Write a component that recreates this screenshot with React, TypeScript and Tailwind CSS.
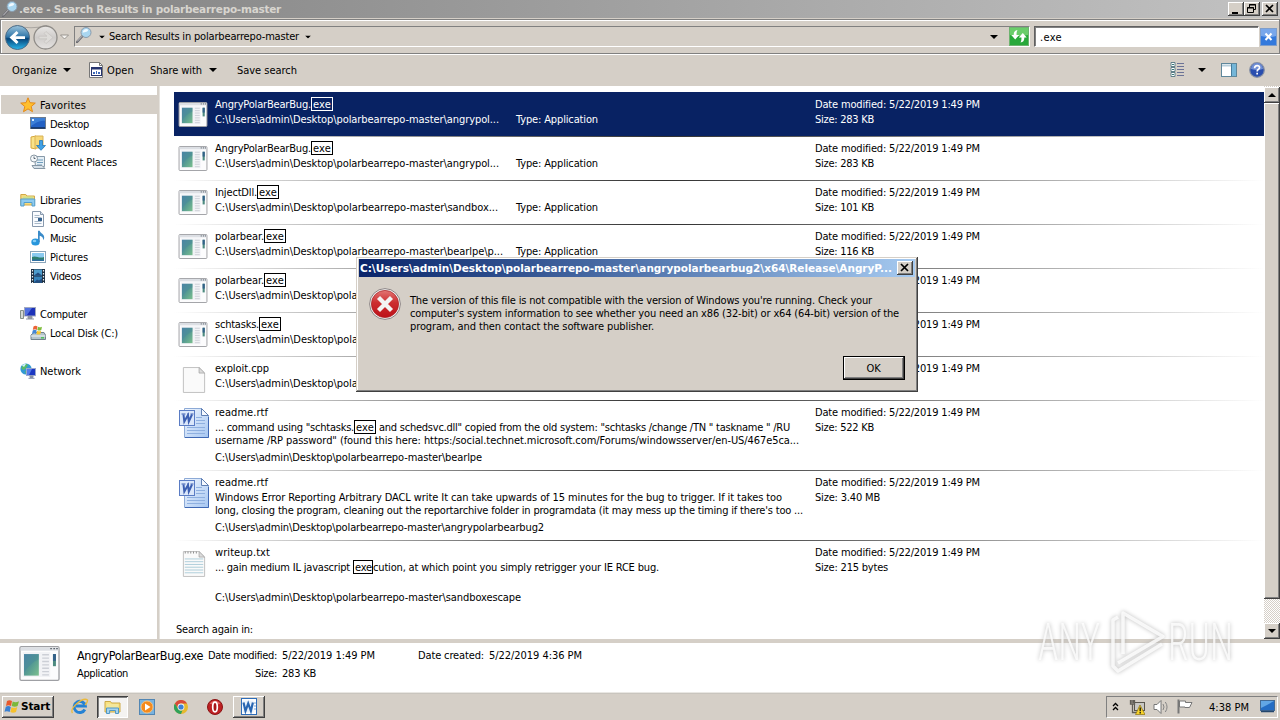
import { useLayoutEffect, useRef } from "react";
import type { ReactNode } from "react";

/* A single line of text whose tracking is adjusted so that it fills a known width. */
function T({ w, children, className = "" }: { w: number; children: string; className?: string }) {
  const ref = useRef<HTMLSpanElement>(null);
  useLayoutEffect(() => {
    const el = ref.current;
    if (!el) return;
    el.style.letterSpacing = "0px";
    const natural = el.getBoundingClientRect().width;
    el.style.letterSpacing = `${(w - natural) / children.length}px`;
  }, [w, children]);
  return (
    <span className={`block shrink-0 ${className}`} style={{ width: w }}>
      <span ref={ref} className="inline-block whitespace-pre">{children}</span>
    </span>
  );
}

const raised =
  "bg-[#d5cfc7] shadow-[inset_-1px_-1px_0_#404040,inset_1px_1px_0_#fff,inset_-2px_-2px_0_#808080]";

const wideBold = "text-[10.5px] font-bold [font-family:'DejaVu_Sans',sans-serif] [font-stretch:normal]";

function Caret({ className = "" }: { className?: string }) {
  return (
    <svg className={`block shrink-0 ${className}`} width="8" height="4" viewBox="0 0 8 4">
      <path d="M0 0h8L4 4z" fill="currentColor" />
    </svg>
  );
}

function Magnifier({ size }: { size: number }) {
  return (
    <svg width={size} height={size} viewBox="0 0 16 16" className="block shrink-0">
      <path d="M1 15L6.500 9" stroke="#6c6c72" strokeWidth="2.400" strokeLinecap="round" />
      <path d="M1.200 14.400L6 9.200" stroke="#d8d8dc" strokeWidth=".8" />
      <circle cx="10" cy="5.500" r="5" fill="#a9d6f0" stroke="#8b9cac" strokeWidth="1" />
      <path d="M6.600 5.500a3.600 3.600 0 0 1 5.400-3c.8 1.700-2.400 2.900-5.400 3z" fill="#f2faff" />
    </svg>
  );
}

function AppIcon({ w, h }: { w: number; h: number }) {
  return (
    <svg width={w} height={h} viewBox="0 0 30 26" className="block shrink-0">
      <defs>
        <linearGradient id="appArt" x2="1" y2="1">
          <stop stopColor="#4f86a8" /><stop offset=".5" stopColor="#559a93" /><stop offset="1" stopColor="#7cc08e" />
        </linearGradient>
      </defs>
      <rect x=".5" y=".5" width="29" height="25" rx="1" fill="#fcfcfd" stroke="#9fa0a4" />
      <rect x="1" y="1" width="28" height="2.500" fill="#dcdfe4" />
      <path d="M23 2h1.200M25.300 2h1.200M27.400 2h1.200" stroke="#5c636c" />
      <rect x="2.500" y="4.500" width="20.500" height="18.500" fill="#f2f3f6" />
      <rect x="3.500" y="6" width="11" height="16" fill="url(#appArt)" />
      <path d="M3.500 20q5-8 11-10v-4h-11z" fill="#3f7ea0" fillOpacity=".3" />
      <path d="M17 6.500h5M17 9h5M17 11.500h5M17 14h5M17 16.500h5M17 19h5M17 21.500h5" stroke="#cccfd6" />
      <rect x="25" y="6" width="2.200" height="9" fill="#4d8b7f" />
      <rect x="25" y="6" width="2.200" height="5" fill="#33618a" />
    </svg>
  );
}

function PageIcon({ lined }: { lined?: boolean }) {
  return (
    <svg width="24" height="28" viewBox="0 0 26 30" className="block shrink-0">
      <path d="M1.500 1.500h17l6 6v21h-23z" fill="#fafafa" stroke="#bdbdbd" />
      <path d="M18.500 1.500v6h6z" fill="#dcdcdc" stroke="#a2a2a2" strokeWidth=".8" />
      {lined && (
        <>
          <path d="M3 9.500h20M3 12.500h20M3 15.500h20M3 18.500h20M3 21.500h20M3 24.500h20" stroke="#a9cbd8" />
          <path d="M3 2.500h14" stroke="#888" strokeDasharray="1 2" strokeWidth="2" />
        </>
      )}
    </svg>
  );
}

function WordDocIcon() {
  return (
    <svg width="30" height="31" viewBox="0 0 30 31" className="block shrink-0">
      <defs>
        <linearGradient id="wordPage" x2="1" y2="1"><stop stopColor="#f2f7fe" /><stop offset="1" stopColor="#a5c6f2" /></linearGradient>
      </defs>
      <path d="M5.500 .5h17l7 7v22h-24z" fill="url(#wordPage)" stroke="#8daad6" />
      <path d="M22.500 .5v7h7z" fill="#f5f9ff" stroke="#5f7fb4" />
      <path d="M17 9.500h6M17 12.500h9M17 15.500h9M8 19.500h18M8 22.500h18M8 25.500h18" stroke="#8fb0e0" />
      <path d="M6 29.500h23.500V9" stroke="#3f68b4" fill="none" />
      <rect x=".5" y="2.500" width="15" height="15" fill="#dbe7fa" stroke="#5a7cc4" />
      <path d="M2.500 6h4M8 6h2M11.500 6h3" stroke="#3c5fb2" />
      <path d="M4.500 6.500l.8 7L9 7l.8 6.500 3.200-7" fill="none" stroke="#3c5fb2" strokeWidth="2" />
    </svg>
  );
}

type NavIconName =
  | "star" | "desktop" | "downloads" | "recent" | "libraries" | "documents"
  | "music" | "pictures" | "videos" | "computer" | "disk" | "network";

const navDrawings: Record<NavIconName, ReactNode> = {
  star: <path d="M8 .8l2 4.900 5.300.4-4.100 3.400 1.300 5.200L8 11.900l-4.500 2.800 1.300-5.200L.7 6.100 6 5.700z" fill="#ffbf2e" stroke="#e58a18" />,
  desktop: (
    <>
      <rect x=".5" y="1.500" width="15" height="11" fill="#2361c4" stroke="#6c7c90" />
      <path d="M1 2h14v3C10 4 6 7 1 10z" fill="#3c7fd6" />
      <path d="M1 12h14" stroke="#14305c" strokeWidth="1.500" />
      <path d="M2 3h2v2H2z" fill="#d6ecff" />
    </>
  ),
  downloads: (
    <>
      <path d="M1 2l5-1v13l-5-1z" fill="#f9e389" stroke="#d6a83e" />
      <path d="M5 1h8v12H5z" fill="#f6d878" stroke="#d9b257" />
      <path d="M9.500 5.500h3v5h3L11 15.300 6.500 10.500h3z" fill="#3fa0e6" stroke="#2478bb" strokeWidth=".8" />
    </>
  ),
  recent: (
    <>
      <path d="M4.500 2.500h10v10h-9z" fill="#e4eef5" stroke="#8799a8" />
      <path d="M7 6h6M7 8.500h6M7 11h5" stroke="#6f9dbd" />
      <circle cx="4" cy="4.500" r="3.500" fill="#f6f9fb" stroke="#8796a2" />
      <path d="M4 2.500v2h1.500" stroke="#345" fill="none" strokeWidth=".8" />
      <path d="M2 11.500h10l3 3H4z" fill="#d6e0e8" stroke="#8596a4" />
    </>
  ),
  libraries: (
    <>
      <path d="M.8 2.500h5l1 1.500h7.700v9H.8z" fill="#f5db7e" stroke="#d2a948" />
      <path d="M3 4.500h10v3H3z" fill="#cfe08c" />
      <path d="M.8 7h14v7H12v-3.500H4V14H.8z" fill="#8ecbf0" stroke="#559fcd" />
    </>
  ),
  documents: (
    <>
      <path d="M2.500 .5h8l3 3v12h-11z" fill="#fafcff" stroke="#8899ad" />
      <path d="M10.500 .5v3h3" fill="#d8e2ee" stroke="#8899ad" />
      <path d="M4.500 4.500h5M4.500 6.500h7M4.500 10.500h7M4.500 12.500h7" stroke="#a9b9c9" />
      <path d="M8 7h4v3H8z" fill="#35628f" />
    </>
  ),
  music: (
    <>
      <ellipse cx="5.500" cy="12" rx="4.200" ry="3.500" fill="#2796dc" />
      <path d="M8 12V.8h1.700c.8 2.700 4.500 3.200 4.500 6.700 0 1-.4 2-1 2.700.3-2.900-1.700-4-3.500-4.500V12z" fill="#3a8bc9" />
      <ellipse cx="4.500" cy="11" rx="1.800" ry="1.200" fill="#84cdf6" />
    </>
  ),
  pictures: (
    <>
      <rect x=".5" y="2.500" width="15" height="11" fill="#fff" stroke="#8ba5ba" />
      <path d="M2 4h12v8H2z" fill="#8acaf0" />
      <path d="M2 8c4-2 7 2 12 0v4H2z" fill="#2d7f70" />
      <path d="M2 10.500h12V12H2z" fill="#2d6ea0" />
    </>
  ),
  videos: (
    <>
      <rect x="1" y="1" width="14" height="14" fill="#1d2f42" />
      <path d="M4 1.500h8v6H4z" fill="#4d9ccc" />
      <path d="M4 8.500h8v6H4z" fill="#3583bb" />
      <path d="M4 7.500l4-3 4 3zM4 14.500l3-3 2 1 3-2v4z" fill="#214b80" />
      <path d="M2.500 2v13M13.500 2v13" stroke="#e9eef2" strokeDasharray="1.500 1.500" strokeWidth="1.200" />
    </>
  ),
  computer: (
    <>
      <path d="M.5 4.500h3v8h-3z" fill="#d3d8d4" stroke="#859089" />
      <rect x="4.500" y="1.500" width="11" height="8.500" fill="#1c32b9" stroke="#a2a9c0" />
      <path d="M5 2h7l-5 7H5z" fill="#5070e0" />
      <path d="M8 10.500h4v2H8zM6 13h8" fill="#999" stroke="#8d95a4" />
    </>
  ),
  disk: (
    <>
      <path d="M1 10l3-2.500h10l1.500 2.500v4.500H1z" fill="#b4c4cc" stroke="#71828c" />
      <path d="M1 11h14.500" stroke="#eef4f7" />
      <path d="M11 12.800h3" stroke="#3dbf4a" strokeWidth="1.300" />
      <path d="M3.500 1.500c1.500-1 2.500-1 4 0L6.800 5c-1.500-1-2.500-1-4 0z" fill="#ec6336" />
      <path d="M8 1.700c1.400.8 2.500.8 4 0L11.300 5c-1.400.8-2.500.8-4 0z" fill="#7fbd3c" />
      <path d="M2.700 5.500c1.400-.9 2.500-.9 4 0L6 9C4.600 8.100 3.500 8.100 2 9z" fill="#4387d5" />
      <path d="M7.200 5.700c1.400.8 2.500.8 4 0L10.400 9c-1.400.8-2.500.8-4 0z" fill="#f5c530" />
    </>
  ),
  network: (
    <>
      <circle cx="6" cy="6" r="5.600" fill="#3299d4" />
      <path d="M2 3c2-3 5-2 6-1L6 5 4 7 1.500 6zM5 8l3 1-2 2.500z" fill="#59ba68" />
      <path d="M2 2.500c1.500-1.500 3-1.700 4-1.500L4 4z" fill="#ccefff" />
      <rect x="6.500" y="5.500" width="9" height="7" fill="#1c38c3" stroke="#9ba7cc" />
      <path d="M7 6h5l-3 6H7z" fill="#547bea" />
      <path d="M10 13h3v1.500h-3zM8.500 15.300h6" fill="#999" stroke="#8590aa" />
    </>
  ),
};

function NavItem({ icon, label, w, child, active, gap }: {
  icon: NavIconName; label: string; w: number; child?: boolean; active?: boolean; gap?: boolean;
}) {
  return (
    <li className={`ml-px flex h-[19px] items-center ${child ? "pl-[29px]" : "pl-[19px]"} ${active ? "bg-[#d5cfc7]" : ""} ${gap ? "mt-[19px]" : ""}`}>
      <svg width="16" height="16" viewBox="0 0 16 16" className="mr-1 block shrink-0">{navDrawings[icon]}</svg>
      <T w={w} className="pt-0.5">{label}</T>
    </li>
  );
}

function Sidebar() {
  return (
    <nav className="w-[157px] shrink-0 bg-white pt-[9px]">
      <ul>
        <NavItem icon="star" label="Favorites" w={46} active />
        <NavItem icon="desktop" label="Desktop" w={39} child />
        <NavItem icon="downloads" label="Downloads" w={52} child />
        <NavItem icon="recent" label="Recent Places" w={67} child />
        <NavItem icon="libraries" label="Libraries" w={41} gap />
        <NavItem icon="documents" label="Documents" w={53} child />
        <NavItem icon="music" label="Music" w={26} child />
        <NavItem icon="pictures" label="Pictures" w={38} child />
        <NavItem icon="videos" label="Videos" w={31} child />
        <NavItem icon="computer" label="Computer" w={47} gap />
        <NavItem icon="disk" label="Local Disk (C:)" w={68} child />
        <NavItem icon="network" label="Network" w={41} gap />
      </ul>
    </nav>
  );
}

function Match({ className = "border-black" }: { className?: string }) {
  return (
    <span className={`-mt-px flex h-[14px] w-[22px] shrink-0 items-center justify-center border ${className}`}>
      <T w={18} className="pt-px">exe</T>
    </span>
  );
}

type Entry = {
  icon: "app" | "page" | "text" | "word";
  name: [string, number];
  match?: boolean;
  selected?: boolean;
  path: [string, number];
  body?: ReactNode;
  type?: boolean;
  size: [string, number];
};

const base = "C:\\Users\\admin\\Desktop\\polarbearrepo-master\\";

const entries: Entry[] = [
  { icon: "app", name: ["AngryPolarBearBug.", 96], match: true, selected: true, path: [base + "angrypol...", 284], type: true, size: ["Size: 283 KB", 59] },
  { icon: "app", name: ["AngryPolarBearBug.", 96], match: true, path: [base + "angrypol...", 284], type: true, size: ["Size: 283 KB", 59] },
  { icon: "app", name: ["InjectDll.", 42], match: true, path: [base + "sandbox...", 283], type: true, size: ["Size: 101 KB", 59] },
  { icon: "app", name: ["polarbear.", 49], match: true, path: [base + "bearlpe\\p...", 288], type: true, size: ["Size: 116 KB", 59] },
  { icon: "app", name: ["polarbear.", 49], match: true, path: [base + "bearlpe\\p...", 288], type: true, size: ["Size: 116 KB", 59] },
  { icon: "app", name: ["schtasks.", 44], match: true, path: [base + "bearlpe\\s...", 288], type: true, size: ["Size: 176 KB", 59] },
  { icon: "page", name: ["exploit.cpp", 54], path: [base + "bearlpe\\e...", 288], size: ["Size: 12 KB", 53] },
  {
    icon: "word", name: ["readme.rtf", 53], path: [base + "bearlpe", 267], size: ["Size: 522 KB", 59],
    body: (
      <>
        <div className="flex h-[15px] items-center">
          <T w={139}>{'... command using "schtasks.'}</T>
          <Match />
          <T w={414}>{' and schedsvc.dll" copied from the old system: "schtasks /change /TN " taskname " /RU'}</T>
        </div>
        <T w={584} className="h-[13px] leading-[11px]">{'username /RP password" (found this here: https:/social.technet.microsoft.com/Forums/windowsserver/en-US/467e5ca...'}</T>
      </>
    ),
  },
  {
    icon: "word", name: ["readme.rtf", 53], path: [base + "angrypolarbearbug2", 329], size: ["Size: 3.40 MB", 65],
    body: (
      <>
        <T w={567}>Windows Error Reporting Arbitrary DACL write It can take upwards of 15 minutes for the bug to trigger. If it takes too</T>
        <T w={588} className="h-[13px] leading-[11px]">long, closing the program, cleaning out the reportarchive folder in programdata (it may mess up the timing if there's too ...</T>
      </>
    ),
  },
  {
    icon: "text", name: ["writeup.txt", 55], path: [base + "sandboxescape", 306], size: ["Size: 215 bytes", 73],
    body: (
      <div className="flex h-[28px] items-start">
        <T w={138}>... gain medium IL javascript </T>
        <span className="flex h-[14px] w-[20px] shrink-0 items-center border border-black pl-px"><T w={17} className="pt-px">exe</T></span>
        <T w={286}>cution, at which point you simply retrigger your IE RCE bug.</T>
      </div>
    ),
  },
];

function EntryRow({ e, first }: { e: Entry; first: boolean }) {
  return (
    <li className={`${e.body ? "h-[70px]" : "h-[44px]"} flex flex-col`}>
      <div className={`h-px shrink-0 ${first ? "bg-[#082263]" : "bg-linear-to-r from-white via-[#303030] via-45% to-white"}`} />
      <div className={`flex min-h-0 grow pt-1 leading-[15px] ${e.selected ? "bg-[#082263] text-white" : ""}`}>
        <div className="flex w-[41px] shrink-0 items-start justify-center">
          {e.icon === "app" && <div className="-ml-[3px] mt-[5px]"><AppIcon w={30} h={25} /></div>}
          {e.icon === "page" && <div className="-ml-0.5 mt-[5px]"><PageIcon /></div>}
          {e.icon === "text" && <div className="-ml-0.5 mt-[5px]"><PageIcon lined /></div>}
          {e.icon === "word" && <div className="-ml-0.5 mt-[3px]"><WordDocIcon /></div>}
        </div>
        <div className="w-[600px] shrink-0">
          <div className="flex h-[15px] items-center">
            <T w={e.name[1]}>{e.name[0]}</T>
            {e.match && <Match className={e.selected ? "border-white" : "border-black"} />}
          </div>
          {e.body}
          <div className={`flex ${e.body ? "mt-0.5" : ""}`}>
            <div className="w-[301px] shrink-0"><T w={e.path[1]}>{e.path[0]}</T></div>
            {e.type && <T w={82}>Type: Application</T>}
          </div>
        </div>
        <div>
          <T w={165}>Date modified: 5/22/2019 1:49 PM</T>
          <T w={e.size[1]}>{e.size[0]}</T>
        </div>
      </div>
    </li>
  );
}

function Results() {
  return (
    <main className="flex min-w-0 grow bg-white">
      <div className="flex grow flex-col pl-[14px] pt-[6px]">
        <ul>{entries.map((e, i) => <EntryRow key={i} e={e} first={i === 0} />)}</ul>
        <T w={77} className="ml-0.5 mt-3">Search again in:</T>
      </div>
      <div className="flex w-4 shrink-0 flex-col bg-[repeating-conic-gradient(#fff_0_25%,#d5cfc7_0_50%)] bg-[length:2px_2px] pt-px">
        <div className={`flex h-4 shrink-0 items-center justify-center ${raised}`}><Caret className="rotate-180" /></div>
        <div className={`h-[496px] ${raised}`} />
        <div className="grow" />
        <div className={`flex h-4 shrink-0 items-center justify-center ${raised}`}><Caret /></div>
      </div>
    </main>
  );
}

function TitleBar() {
  return (
    <header className="flex h-[18px] shrink-0 items-center bg-linear-to-r from-[#828282] to-[#c2c2c2] pl-0.5 pr-[2px]">
      <Magnifier size={16} />
      <T w={262} className={`ml-px text-[#d8d5cf] ${wideBold}`}>.exe - Search Results in polarbearrepo-master</T>
      <div className="ml-auto flex h-[14px]">
        <div className={`h-[14px] w-4 ${raised}`}>
          <svg width="16" height="14"><path d="M4 10h6v2H4z" /></svg>
        </div>
        <div className={`h-[14px] w-4 ${raised}`}>
          <svg width="16" height="14" fill="none" stroke="#000"><path d="M5.500 5V2.500h6v5H10M5 3h7M3.500 5.500h6v5h-6zM3 6h7" /></svg>
        </div>
        <div className={`ml-0.5 h-[14px] w-4 ${raised}`}>
          <svg width="16" height="14" stroke="#000" strokeWidth="1.700"><path d="M4 3l7 7M11 3l-7 7" /></svg>
        </div>
      </div>
    </header>
  );
}

function AddressBar() {
  return (
    <div className="mt-px flex h-[35px] shrink-0 items-center border border-[#808080] pl-1 shadow-[inset_1px_1px_0_#fff,0_1px_0_#fff]">
      <svg width="65" height="30" viewBox="0 0 65 30" className="block shrink-0">
        <defs>
          <linearGradient id="back" x2="0" y2="1"><stop stopColor="#9cc4dc" /><stop offset=".48" stopColor="#2f75a8" /><stop offset=".55" stopColor="#064479" /><stop offset="1" stopColor="#2bb8ed" /></linearGradient>
          <linearGradient id="fwd" x2="0" y2="1"><stop stopColor="#e9e7e5" /><stop offset=".5" stopColor="#cfccca" /><stop offset="1" stopColor="#e5e3e1" /></linearGradient>
        </defs>
        <path d="M10 3.500Q26 8 42 3.500" fill="none" stroke="#aaa6a1" />
        <circle cx="12.500" cy="15.500" r="12" fill="url(#back)" stroke="#4d6c86" />
        <path d="M4.500 15.500l7-6.500 2 2-3.200 3.200H20v2.800h-9.200L13.500 20l-2 2z" fill="#fff" />
        <circle cx="40.500" cy="15.500" r="11.500" fill="url(#fwd)" stroke="#8f8c88" strokeWidth="1.300" />
        <path d="M48 15.500l-7-6-2 2 3 2.700h-8v2.600h8l-3 2.800 2 2z" fill="#dddbd8" stroke="#c3c0bc" strokeWidth=".6" />
        <path d="M55.500 13h8L59.500 17z" fill="#f6f4f1" stroke="#88847e" strokeWidth=".8" />
      </svg>
      <div className="ml-[4px] flex h-[21px] w-[956px] items-center border border-[#fff] border-l-[#808080] border-t-[#808080] pl-px">
        <div className="-mt-1"><Magnifier size={16} /></div>
        <Caret className="ml-[6px] scale-[.75]" />
        <T w={190} className="ml-[3px]">Search Results in polarbearrepo-master</T>
        <Caret className="ml-[5px] scale-[.75]" />
        <Caret className="ml-auto mr-[11px]" />
        <svg width="20" height="19" className="block shrink-0">
          <rect x=".5" y=".5" width="19" height="18" fill="#28a83a" stroke="#6db36f" />
          <path d="M1 1h18v7Q10 10 1 8z" fill="#6acd6a" />
          <path d="M8.500 3Q4.500 3.500 4.700 8H2.300l3.900 4.500L10.200 8H7.600Q7.300 5 8.500 3zM11.500 15.500Q15.500 15 15.300 10.500h2.400L13.800 6 9.800 10.500h2.600q.3 3-.9 5z" fill="#fff" />
        </svg>
      </div>
      <div className="ml-[4px] flex h-[21px] w-[225px] items-center border border-white border-l-[#606060] border-t-[#606060] bg-white pl-[5px] pt-0.5 shadow-[inset_1px_1px_0_#808080]">
        <T w={22}>.exe</T>
      </div>
      <svg width="17" height="18" className="ml-[1px] block shrink-0">
        <rect x=".5" y=".5" width="16" height="17" fill="#3379dc" stroke="#7f9eca" />
        <path d="M1 1h15v7q-7 2-15 0z" fill="#78a7eb" />
        <path d="M5.500 5.500l6 6.500M11.500 5.500l-6 6.500" stroke="#fff" strokeWidth="2" />
      </svg>
    </div>
  );
}

function Toolbar() {
  return (
    <div className="flex h-8 shrink-0 items-center pl-3">
      <T w={45}>Organize</T>
      <Caret className="ml-[6px]" />
      <svg width="16" height="16" className="ml-[17px] mr-[3px] block shrink-0">
        <path d="M1.500 .5h10l3 3v12h-13z" fill="#fff" stroke="#777" />
        <path d="M11.500 .5v3h3" fill="none" stroke="#777" />
        <rect x="3.500" y="5.500" width="10" height="8" fill="#fff" stroke="#26346f" />
        <path d="M3 6.500h11" stroke="#26346f" strokeWidth="2" />
        <path d="M5 10h2v2H5zM8 9h1v3H8zM10 10h2v2h-2z" fill="#3d69ba" />
      </svg>
      <T w={27}>Open</T>
      <T w={52} className="ml-[16px]">Share with</T>
      <Caret className="ml-[7px]" />
      <T w={60} className="ml-[20px]">Save search</T>
      <svg width="15" height="16" className="ml-auto block shrink-0">
        <path d="M1 .5h4v4H1zM1 5.500h4v4H1zM1 10.500h4v4H1z" fill="#fff" stroke="#61818a" />
        <path d="M2 2.500h2M2 7.500h2M2 12.500h2" stroke="#357a7a" />
        <path d="M7 1.500h7M7 4.500h7M7 7.500h7M7 10.500h7M7 13.500h7" stroke="#6b7396" />
      </svg>
      <Caret className="ml-[13px]" />
      <svg width="16" height="14" className="ml-[15px] block shrink-0">
        <rect x=".5" y=".5" width="15" height="13" fill="#fff" stroke="#5e879b" />
        <path d="M1 2.500h14" stroke="#b7cedb" strokeWidth="2" />
        <path d="M10 1h5v12h-5z" fill="#74b6d8" /><path d="M10.500 1v12" stroke="#467c9c" />
      </svg>
      <svg width="16" height="16" viewBox="0 0 16 16" className="ml-3 mr-[15px] block shrink-0">
        <circle cx="8" cy="8" r="7.300" fill="#294dae" stroke="#8791a5" strokeWidth="1.200" />
        <path d="M2 7a6 6 0 0 1 12 0q-6 2-12 0" fill="#718fd5" />
        <path d="M5.600 6.200q0-2.500 2.500-2.500t2.400 2q0 1-1.300 1.800Q8.200 8.100 8.200 9.500" fill="none" stroke="#fff" strokeWidth="1.700" />
        <path d="M7.300 10.700H9v1.700H7.300z" fill="#fff" />
      </svg>
    </div>
  );
}

function DetailsPane() {
  return (
    <section className="flex h-[49px] shrink-0 bg-white pl-[19px] pt-[3px]">
      <AppIcon w={41} h={35} />
      <div className="ml-[17px] w-[131px] shrink-0 pt-px">
        <T w={126} className="h-[18px] text-[12.500px] leading-[18px]">AngryPolarBearBug.exe</T>
        <T w={51} className="leading-[18px]">Application</T>
      </div>
      <div className="w-[210px] shrink-0 pt-px leading-[18px]">
        <div className="flex gap-[5px]"><T w={69}>Date modified:</T><T w={93}>5/22/2019 1:49 PM</T></div>
        <div className="flex gap-[5px] pl-[47px]"><T w={22}>Size:</T><T w={34}>283 KB</T></div>
      </div>
      <div className="flex gap-[5px] pt-px leading-[18px]"><T w={66}>Date created:</T><T w={93}>5/22/2019 4:36 PM</T></div>
    </section>
  );
}

function Taskbar() {
  return (
    <footer className="flex h-[28px] shrink-0 items-center border-t border-[#e9e7e3] bg-[#d5cfc7] pl-0.5 shadow-[inset_0_1px_0_#c9c5be]">
      <div className={`flex h-[22px] w-[52px] items-center pl-0.5 ${raised}`}>
        <svg width="16" height="15" viewBox="0 0 16 15" className="block shrink-0">
          <path d="M3 2Q5.500 .3 8 2L7 7Q4.500 5.400 2 7z" fill="#e8592c" />
          <path d="M8.700 2.400Q11.500 4 15 2.200L13.600 7Q11 8.500 7.700 7z" fill="#7bb83b" />
          <path d="M1.800 7.800Q4.500 6.300 6.800 8L5.700 13Q3 11.500.5 12.800z" fill="#3a80d2" />
          <path d="M7.500 8.200Q10.500 9.600 13.300 8L12 13Q9 14.500 6.400 13z" fill="#f6c12c" />
        </svg>
        <T w={29} className={`ml-px ${wideBold}`}>Start</T>
      </div>
      <svg width="18" height="17" viewBox="0 0 18 17" className="ml-[17px] block shrink-0">
        <path d="M13.800 11.500A5.600 5.600 0 1 1 14.300 8H5" fill="none" stroke="#2582d4" strokeWidth="3" />
        <path d="M1.500 15Q-1 11.500 6 5.500T16.500 2Q17 4 14 7" fill="none" stroke="#ecba3b" strokeWidth="1.300" />
      </svg>
      <div className="ml-2 flex h-[22px] w-[31px] items-center justify-center bg-[#f4f3f1] pt-px shadow-[inset_1px_1px_0_#404040,inset_-1px_-1px_0_#fff,inset_2px_2px_0_#808080]">
        <svg width="17" height="16" viewBox="0 0 17 16">
          <path d="M1 2.500h5.500l1 1.500H16v9H1z" fill="#f8e283" stroke="#cda945" />
          <path d="M3 5h11v4H3z" fill="#f4e79a" />
          <path d="M2.500 14.500V9h12v5.500h-3v-3H5.600v3z" fill="#a5d3ee" stroke="#5198c4" />
        </svg>
      </div>
      <svg width="16" height="16" viewBox="0 0 16 16" className="ml-[11px] block shrink-0">
        <rect x=".5" y=".5" width="15" height="15" fill="#78b3e0" stroke="#5286b3" />
        <circle cx="8" cy="8" r="6" fill="#f48a1d" stroke="#f8c27c" /><path d="M6 4.500l5.500 3.500L6 11.500z" fill="#fff" />
      </svg>
      <svg width="14" height="14" viewBox="0 0 14 14" className="ml-[19px] block shrink-0">
        <circle cx="7" cy="7" r="7" fill="#e6b92f" />
        <path d="M.9 3.500A7 7 0 0 1 13.100 3.500H7A3.500 3.500 0 0 0 4 8.800z" fill="#d9493a" />
        <path d="M.9 3.500L4 8.800a3.500 3.500 0 0 0 4.500 1.500L7 14A7 7 0 0 1 .9 3.500" fill="#2fa15a" />
        <circle cx="7" cy="7" r="3.400" fill="#f5f5f5" /><circle cx="7" cy="7" r="2.600" fill="#3c80d6" />
      </svg>
      <svg width="16" height="16" viewBox="0 0 16 16" className="ml-[19px] block shrink-0">
        <circle cx="8" cy="8" r="7.500" fill="#bd2022" stroke="#8b1314" /><path d="M2.500 4.500Q8-1 13.500 4.500 8 7 2.500 4.500" fill="#e26564" />
        <ellipse cx="8" cy="8" rx="2.300" ry="4.800" fill="#a81518" stroke="#fff" strokeWidth="1.700" />
      </svg>
      <div className={`ml-[10px] flex h-[22px] w-8 items-center justify-center ${raised}`}>
        <svg width="16" height="17" viewBox="0 0 16 17">
          <rect x=".5" y=".5" width="15" height="16" fill="#fff" stroke="#2d6cb8" />
          <path d="M13 5h2M13 8h2M13 11h2" stroke="#76a5d8" />
          <path d="M1.500 2.500h11v12h-11z" fill="#e8f1fb" />
          <path d="M2.500 4.500l2 8.500 2.700-7.500 2.700 7.500 2-8.500" fill="none" stroke="#2866b2" strokeWidth="2.200" />
        </svg>
      </div>
      <div className="ml-auto mr-0.5 flex h-[22px] w-[172px] items-center border border-white border-l-[#808080] border-t-[#808080] pl-[5px]">
        <svg width="7" height="9" className="block shrink-0" fill="none" stroke="#000" strokeWidth="1.300"><path d="M1 4l2.500-2.500L6 4M1 8l2.500-2.500L6 8" /></svg>
        <svg width="16" height="16" viewBox="0 0 16 16" className="ml-[10px] block shrink-0">
          <rect x="5.500" y="3.500" width="10" height="8" fill="#c9c8c4" stroke="#59564e" />
          <path d="M1.500 1v4h4V1M3.500 5v8.500h6M3 1v3M4.500 1v3" fill="none" stroke="#605d56" strokeWidth="1.300" />
          <path d="M11 6l5 9.500H6.500z" fill="#f8d32a" stroke="#8b7112" strokeWidth=".7" /><path d="M11.200 8.500v3.700M11.200 13v1.500" stroke="#111" strokeWidth="1.300" />
        </svg>
        <svg width="17" height="16" viewBox="0 0 17 16" className="ml-[8px] block shrink-0" fill="none" stroke="#858585">
          <path d="M1 5.500h3L8 1.500v13L4 10.500H1z" fill="#fff" stroke="#777" /><path d="M10 5q2 3 0 6M12.300 3q3.500 5 0 10" />
        </svg>
        <svg width="16" height="15" viewBox="0 0 16 15" className="ml-[7px] block shrink-0">
          <path d="M1.500 .5v14" stroke="#777" strokeWidth="2" /><path d="M2.500 2h6v1.500H15L12.500 8.500H8V8H2.500z" fill="#fff" stroke="#777" />
        </svg>
        <T w={40} className="ml-[16px] pt-px">4:38 PM</T>
        <svg width="15" height="13" viewBox="0 0 15 13" className="ml-[11px] block shrink-0">
          <rect x=".5" y=".5" width="14" height="10" fill="#256dc4" stroke="#436a95" /><path d="M1 1h13q-5 3-13 7z" fill="#62a6e5" />
          <path d="M1 11.500h13" stroke="#24466c" strokeWidth="1.500" />
        </svg>
      </div>
    </footer>
  );
}

function ErrorDialog() {
  return (
    <div role="dialog" className="absolute left-[356px] top-[257px] flex h-[135px] w-[562px] flex-col bg-[#d5cfc7] px-[3px] pt-0.5 shadow-[inset_-1px_-1px_0_#404040,inset_1px_1px_0_#d5cfc7,inset_-2px_-2px_0_#808080,inset_2px_2px_0_#fff]">
      <div className="flex h-[18px] shrink-0 items-center bg-linear-to-r from-[#0a246a] to-[#a6caf0] pl-px pr-[2px]">
        <T w={532} className={`pt-px text-white ${wideBold}`}>{"C:\\Users\\admin\\Desktop\\polarbearrepo-master\\angrypolarbearbug2\\x64\\Release\\AngryP..."}</T>
        <div className={`ml-auto h-[14px] w-4 ${raised}`}>
          <svg width="16" height="14" stroke="#000" strokeWidth="1.700"><path d="M4 3l7 7M11 3l-7 7" /></svg>
        </div>
      </div>
      <div className="flex pl-[10px] pt-[11px]">
        <svg width="32" height="32" viewBox="0 0 32 32" className="block shrink-0">
          <defs><linearGradient id="err" x2="0" y2="1"><stop stopColor="#e27573" /><stop offset=".45" stopColor="#cc2d30" /><stop offset="1" stopColor="#bd1119" /></linearGradient></defs>
          <circle cx="16" cy="16" r="15.400" fill="#eee" stroke="#8c8484" />
          <circle cx="16" cy="16" r="13.600" fill="url(#err)" stroke="#a91b20" strokeWidth=".7" />
          <path d="M9.500 9.500l13 13M22.500 9.500l-13 13" stroke="#f3f3f3" strokeWidth="4.300" />
        </svg>
        <div className="ml-[9px] pt-[6px] leading-[13px]">
          <T w={462}>The version of this file is not compatible with the version of Windows you're running. Check your</T>
          <T w={489}>computer's system information to see whether you need an x86 (32-bit) or x64 (64-bit) version of the</T>
          <T w={244}>program, and then contact the software publisher.</T>
        </div>
      </div>
      <div className="mb-3 mr-[10px] mt-auto flex h-6 w-[62px] items-center justify-center self-end border border-black pr-px shadow-[inset_-1px_-1px_0_#404040,inset_1px_1px_0_#fff,inset_-2px_-2px_0_#808080]">
        <T w={14}>OK</T>
      </div>
    </div>
  );
}

function Watermark() {
  return (
    <svg width="204" height="76" viewBox="0 0 204 76" className="pointer-events-none absolute left-[1034px] top-[604px] overflow-visible [filter:drop-shadow(0_0_2px_#aaa)]">
      <g fill="#fff" fillOpacity=".8" fontFamily="Roboto, sans-serif" fontSize="51" fontWeight="300">
        <text x="4" y="56" textLength="62" lengthAdjust="spacingAndGlyphs">ANY</text>
        <text x="134" y="56" textLength="65" lengthAdjust="spacingAndGlyphs">RUN</text>
      </g>
      <g fill="none" stroke="#fff" strokeOpacity=".8" strokeWidth="3.500" strokeLinejoin="round">
        <path d="M89 50V9l40 23.500L84 59" />
        <path d="M84 13l-5 3v46l5 5 44-27" />
      </g>
    </svg>
  );
}

export default function App() {
  return (
    <div className="relative flex h-[720px] w-[1280px] flex-col overflow-hidden bg-[#d5cfc7] text-[11px] leading-[15px] text-black [font-family:'DejaVu_Sans_Condensed','DejaVu_Sans',sans-serif] [font-stretch:condensed]">
      <TitleBar />
      <AddressBar />
      <Toolbar />
      <div className="flex h-[553px] shrink-0">
        <Sidebar />
        <div className="w-[3px] shrink-0 border-r border-[#e5e2dd] bg-[#d5cfc7]" />
        <Results />
      </div>
      <div className="h-1 shrink-0" />
      <DetailsPane />
      <Taskbar />
      <ErrorDialog />
      <Watermark />
    </div>
  );
}
